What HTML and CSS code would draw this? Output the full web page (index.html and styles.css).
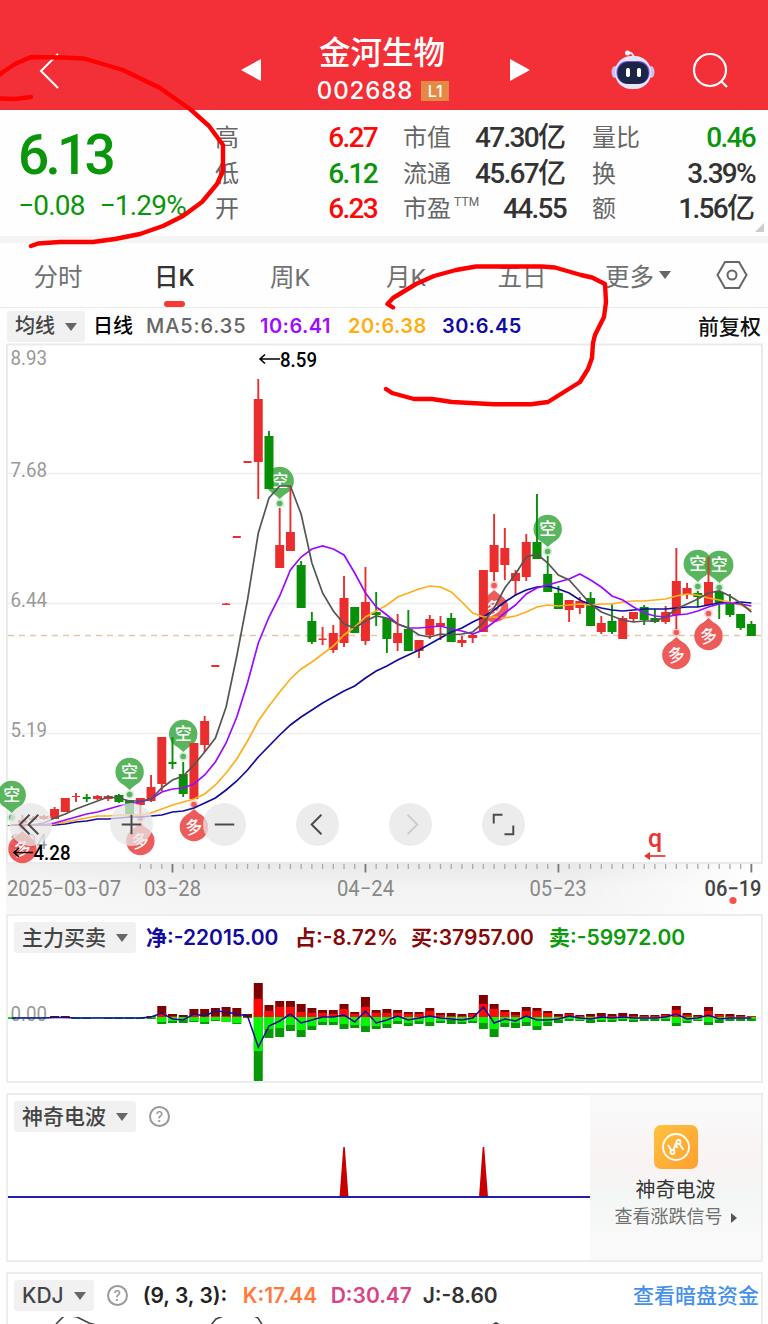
FILE: index.html
```html
<!DOCTYPE html>
<html lang="zh-CN">
<head>
    <meta charset="UTF-8">
    <meta name="viewport" content="width=device-width, initial-scale=1.0">
    <title>金河生物 002688</title>
    <link rel="stylesheet" href="styles.css">
</head>
<body>
    <div class="page">
        <header class="topbar">
            <svg class="back" width="24" height="38" viewBox="0 0 24 38"><path d="M20 2 L3 19 L20 36"/></svg>
            <svg class="arrow" width="20" height="24" viewBox="0 0 20 24"><path d="M0 12 L20 1 V23 Z"/></svg>
            <div class="title">
                <h1>金河生物</h1>
                <div class="code"><span>002688</span><b>L1</b></div>
            </div>
            <svg class="arrow next" width="20" height="24" viewBox="0 0 20 24"><path d="M20 12 L0 1 V23 Z"/></svg>
            <svg class="robot" width="44" height="40" viewBox="0 0 44 40">
                <path d="M17 3 Q22 2 23 8" fill="none" stroke="#eee9ff" stroke-width="2"/>
                <circle cx="16.500" cy="3" r="2.500" fill="#fff"/>
                <ellipse cx="4" cy="22" rx="3.500" ry="6" fill="#c9c0f5"/>
                <ellipse cx="40" cy="22" rx="3.500" ry="6" fill="#c9c0f5"/>
                <rect x="4" y="6" width="36" height="33" rx="16" fill="#e8e4fa"/>
                <rect x="5.500" y="11" width="33" height="23" rx="11" fill="#6d54dc"/>
                <rect x="6.500" y="12" width="31" height="22" rx="10.500" fill="#1c2447"/>
                <rect x="15" y="18" width="4" height="9" rx="1.800" fill="#fff"/>
                <rect x="26" y="18" width="4" height="9" rx="1.800" fill="#fff"/>
            </svg>
            <svg class="search" width="38" height="38" viewBox="0 0 38 38"><circle cx="18" cy="18" r="16"/><path d="M29 29 L35 35"/></svg>
        </header>

        <section class="quote">
            <div class="price">
                <strong>6.13</strong>
                <p><span>−0.08</span><span>−1.29%</span></p>
            </div>
            <dl>
                <div><dt>高</dt><dd class="up">6.27</dd></div>
                <div><dt>低</dt><dd class="down">6.12</dd></div>
                <div><dt>开</dt><dd class="up">6.23</dd></div>
            </dl>
            <dl>
                <div><dt>市值</dt><dd>47.30<i>亿</i></dd></div>
                <div><dt>流通</dt><dd>45.67<i>亿</i></dd></div>
                <div><dt>市盈<sup>TTM</sup></dt><dd>44.55</dd></div>
            </dl>
            <dl>
                <div><dt>量比</dt><dd class="down">0.46</dd></div>
                <div><dt>换</dt><dd>3.39%</dd></div>
                <div><dt>额</dt><dd>1.56<i>亿</i></dd></div>
            </dl>
            <span class="corner"></span>
        </section>

        <nav class="tabs">
            <a>分时</a>
            <a class="active">日K</a>
            <a>周K</a>
            <a>月K</a>
            <a>五日</a>
            <a>更多<i class="caret"></i></a>
            <a><svg width="32" height="30" viewBox="0 0 32 30"><path d="M9 2 H23 L30.500 15 L23 28 H9 L1.500 15 Z"/><circle cx="16" cy="15" r="4.500"/></svg></a>
        </nav>

        <div class="ma-row">
            <span class="select">均线<i class="caret"></i></span>
            <span class="period">日线</span>
            <span class="ma5">MA5:6.35</span>
            <span class="ma10">10:6.41</span>
            <span class="ma20">20:6.38</span>
            <span class="ma30">30:6.45</span>
            <span class="adjust">前复权</span>
        </div>

        <section class="kline">
            <svg id="kline" width="768" height="571" viewBox="0 343 768 571"></svg>
            <div class="tools">
                <button><svg viewBox="0 0 44 44"><path d="M21 12 L11 22 L21 32 M30 12 L20 22 L30 32"/></svg></button>
                <button><svg viewBox="0 0 44 44"><path d="M12 22 H32 M22 12 V32"/></svg></button>
                <button><svg viewBox="0 0 44 44"><path d="M12 22 H32"/></svg></button>
                <button><svg viewBox="0 0 44 44"><path d="M26 12 L16 22 L26 32"/></svg></button>
                <button class="disabled"><svg viewBox="0 0 44 44"><path d="M19 12 L29 22 L19 32"/></svg></button>
                <button><svg viewBox="0 0 44 44"><path d="M12 21 V12 H21 M23 32 H32 V23"/></svg></button>
            </div>
        </section>

        <section class="panel">
            <div class="panel-head">
                <span class="select">主力买卖<i class="caret"></i></span>
                <span class="net">净:-22015.00</span>
                <span class="buy share">占:-8.72%</span>
                <span class="buy">买:37957.00</span>
                <span class="sell">卖:-59972.00</span>
            </div>
            <svg id="flow" width="753" height="122" viewBox="8 959 753 122"></svg>
        </section>

        <section class="panel wave">
            <div class="wave-main">
                <div class="panel-head">
                    <span class="select">神奇电波<i class="caret"></i></span>
                    <span class="help">?</span>
                </div>
                <svg width="582" height="122" viewBox="8 1138 582 122">
                    <path d="M339.500 1197 L343.300 1147 h1.500 L348.500 1197 Z M479 1197 L482.700 1147 h1.500 L488 1197 Z" fill="#c80000"/>
                    <path d="M8 1197 H590" stroke="#1f1fa8" stroke-width="2"/>
                </svg>
            </div>
            <div class="promo">
                <svg width="44" height="44" viewBox="0 0 44 44">
                    <defs><linearGradient id="gold" x1="0" y1="0" x2="1" y2="1"><stop offset="0" stop-color="#ffc240"/><stop offset="1" stop-color="#ff9f2e"/></linearGradient></defs>
                    <rect width="44" height="44" rx="7" fill="url(#gold)"/>
                    <g fill="none" stroke="#fff" stroke-width="1.800">
                        <circle cx="22" cy="22" r="13"/>
                        <circle cx="18.500" cy="27" r="2"/>
                        <circle cx="24.500" cy="17" r="2"/>
                        <path d="M14 20 L17.500 25.500 M19.500 25 L21.500 19.500 L23.500 23 M25.500 19 L29.500 25"/>
                    </g>
                </svg>
                <h3>神奇电波</h3>
                <p>查看涨跌信号<i></i></p>
            </div>
        </section>

        <section class="panel kdj">
            <div class="panel-head">
                <span class="select">KDJ<i class="caret"></i></span>
                <span class="help">?</span>
                <span class="params">(9, 3, 3):</span>
                <span class="k">K:17.44</span>
                <span class="d">D:30.47</span>
                <span class="j">J:-8.60</span>
                <a class="link">查看暗盘资金</a>
            </div>
            <svg width="753" height="10" viewBox="8 1317 753 10">
                <path d="M56 1324 L65 1315 L77 1317 L89 1323 L96 1325 M211 1325 L216 1319 L226 1315 L237 1313 L248 1313 L258 1318 L263 1326 M492 1325 L496 1323 L500 1325" fill="none" stroke="#444" stroke-width="1.600"/>
            </svg>
        </section>

        <svg class="pen" width="768" height="420" viewBox="0 0 768 420">
            <path d="M31 246 L38 243.500 L60 242 L93 242 L115 239 L140 234 L163 226 L183 216 L202 202 L217 184 L223 171 L223 145 L209 126 L190 109 L160 88 L123 70 L84 58.500 L62 57.500 L31 57 L15 64 L3 72 L-2 76"/>
            <path d="M-2 98.500 L15 99 L31 97"/>
            <path d="M393 307.500 L387.500 304 L393 298 L416 284 L434 276 L456 270 L476 266.500 L542 266.500 L555 267.500 L581 275 L592 277.500 L605 284 L606 302 L604 317 L595 335 L593 343 L592 358 L588 369 L580 382 L548 402 L531 404.300 L494 404.300 L452 402 L432 399 L414 399 L392 393 L386 389"/>
        </svg>
    </div>
    <script src="script.js"></script>
</body>
</html>
```
FILE: styles.css
```css
* {
    box-sizing: border-box;
}
body {
    margin: 0;
    background-color: #fefefe;
    font-family: Roboto, "Noto Sans CJK SC", sans-serif;
    color: #333;
}
h1, h3, p, dl, dd {
    margin: 0;
}
i {
    font-style: normal;
}
svg {
    display: block;
    flex: none;
}
.page {
    position: relative;
    width: 768px;
    height: 1324px;
    overflow: hidden;
}

/* top bar */
.topbar {
    display: flex;
    height: 110px;
    padding: 28px 38px 0 38px;
    background-color: #f33038;
    color: #fff;
}
.back {
    margin: 24px 179px 0 0;
    fill: none;
    stroke: #fff;
    stroke-width: 2;
}
.arrow {
    margin-top: 30px;
    fill: #fff;
}
.title {
    width: 250px;
    display: flex;
    flex-direction: column;
    align-items: center;
    padding-right: 5px;
}
.title h1 {
    font-size: 31.5px;
    line-height: 44px;
    font-weight: 500;
    font-family: "Noto Sans CJK SC", sans-serif;
}
.code {
    display: flex;
    align-items: center;
    gap: 8px;
    margin-left: 2px;
    height: 38px;
    font: 500 24px/38px Inter, sans-serif;
    letter-spacing: 0.9px;
}
.code b {
    width: 28px;
    height: 20px;
    background-color: #e48a45;
    font: 500 16px/20px Inter, sans-serif;
    letter-spacing: 0;
    text-align: center;
}
.next {
    margin-left: 2px;
}
.robot {
    margin: 22px 0 0 81px;
}
.search {
    margin: 24px 0 0 37px;
    fill: none;
    stroke: #fff;
    stroke-width: 2.2;
}

/* quote */
.quote {
    position: relative;
    display: grid;
    grid-template-columns: 169px 162px 163px 163px;
    column-gap: 26px;
    height: 133px;
    padding: 10px 13px 0 20px;
    border-bottom: 7px solid #f4f4f4;
}
.price {
    color: #0a960a;
    white-space: nowrap;
}
.price strong {
    display: block;
    margin: 5px 0 0 -2px;
    font-size: 55px;
    line-height: 60px;
    font-weight: 500;
    letter-spacing: -3.8px;
}
.price p {
    display: flex;
    gap: 15px;
    margin: 6px 0 0 -2px;
    font-size: 28px;
    line-height: 30px;
    letter-spacing: -0.8px;
}
.quote dl div {
    display: flex;
    justify-content: space-between;
    height: 35.5px;
    line-height: 35px;
}
.quote dt {
    font-size: 24px;
    line-height: 37px;
    color: #666;
    white-space: nowrap;
}
.quote dd {
    font-size: 28px;
    font-weight: 500;
    letter-spacing: -1.7px;
    white-space: nowrap;
}
.quote dd i {
    letter-spacing: 0;
    font-weight: 500;
}
.quote sup {
    font-size: 12px;
    line-height: 1;
    vertical-align: 11px;
    letter-spacing: 0.2px;
    margin-left: 3px;
}
.quote .up {
    color: #fb0a0a;
}
.quote .down {
    color: #0a960a;
}
.corner {
    position: absolute;
    right: 4px;
    bottom: 4px;
    border-left: 9px solid transparent;
    border-bottom: 9px solid #ccc;
}

/* tabs */
.tabs {
    display: grid;
    grid-template-columns: repeat(6, 116px) 1fr;
    height: 65px;
    border-bottom: 1px solid #ededed;
}
.tabs a {
    position: relative;
    display: flex;
    align-items: center;
    justify-content: center;
    font-size: 24.5px;
    color: #707070;
}
.tabs .active {
    font-weight: 500;
    color: #333;
}
.tabs .active::after {
    content: "";
    position: absolute;
    left: 48px;
    bottom: 0;
    width: 21px;
    height: 6px;
    border-radius: 3px;
    background-color: #f83a32;
}
.tabs svg {
    fill: none;
    stroke: #666;
    stroke-width: 2;
}
.caret {
    display: inline-block;
    border: 6px solid transparent;
    border-top: 8px solid #666;
    border-bottom: 0;
    margin-left: 10px;
}
.tabs .caret {
    margin-left: 5px;
}

/* moving averages */
.ma-row {
    display: flex;
    align-items: center;
    height: 35px;
    padding: 2px 7px 0;
    font: 600 20px/31px Inter, "Noto Sans CJK SC", sans-serif;
    letter-spacing: 0.45px;
    white-space: nowrap;
}
.select {
    display: flex;
    align-items: center;
    height: 31px;
    padding: 0 8px;
    border-radius: 3px;
    background-color: #f1f1f1;
    color: #444;
    font-weight: 500;
    letter-spacing: 0;
}
.period {
    margin: 0 13px 0 8px;
    color: #000;
    font-weight: 500;
    letter-spacing: 0;
}
.ma5 { width: 114px; color: #666; font-weight: 500; letter-spacing: 0.9px; }
.ma10 { width: 88px; color: #9d0cff; }
.ma20 { width: 94px; color: #ffae12; }
.ma30 { color: #120ba3; }
.adjust {
    margin-left: auto;
    color: #111;
    font-size: 21px;
    font-weight: 500;
    letter-spacing: 0;
}

/* candles */
.kline {
    position: relative;
    height: 571px;
}
.kline text {
    font-family: Roboto, "Noto Sans CJK SC", sans-serif;
}
.tools {
    position: absolute;
    left: 9px;
    top: 460px;
    display: flex;
    gap: 50px;
}
.tools button {
    width: 43px;
    height: 43px;
    padding: 0;
    border: 0;
    border-radius: 50%;
    background-color: rgba(230, 230, 230, 0.75);
}
.tools button:first-child {
    margin-right: 8px;
}
.tools svg {
    fill: none;
    stroke: #4a4a4a;
    stroke-width: 2;
}
.tools .disabled svg {
    stroke: #ccc;
}

/* indicator panels */
.panel {
    height: 169px;
    margin: 0 5px 10px 6px;
    border: 2px solid #ededed;
    background-color: #fff;
}
.panel-head {
    display: flex;
    align-items: center;
    height: 43px;
    padding-left: 6px;
    font: 600 21px/31px Inter, "Noto Sans CJK SC", sans-serif;
    white-space: nowrap;
}
.net { width: 149px; margin-left: 10px; color: #120b9c; }
.buy { width: 138px; color: #840909; }
.share { width: 116px; }
.sell { color: #0b9a0b; }
.wave {
    display: flex;
}
.wave-main {
    width: 582px;
}
.help {
    width: 21px;
    height: 21px;
    margin-left: 13px;
    border: 2px solid #999;
    border-radius: 50%;
    color: #999;
    font-size: 14px;
    font-weight: 500;
    line-height: 17px;
    text-align: center;
}
.promo {
    flex: 1;
    display: flex;
    flex-direction: column;
    align-items: center;
    padding-top: 30px;
    background: linear-gradient(#f9f9f9 10%, #faf3f3 40%, #f3f7f5 62%, #f9f9f9 85%);
}
.promo h3 {
    margin-top: 6px;
    font-size: 20px;
    line-height: 30px;
    font-weight: 400;
}
.promo p {
    font-size: 18px;
    line-height: 24px;
    color: #707070;
}
.promo i {
    display: inline-block;
    margin-left: 8px;
    border: 5px solid transparent;
    border-left: 6px solid #555;
    border-right: 0;
}
.params { margin-left: 15px; width: 100px; color: #222; }
.k { width: 88px; color: #ff7a3d; }
.d { width: 92px; color: #d84585; }
.j { color: #333; }
.link {
    margin-left: auto;
    margin-right: 2px;
    color: #4490ea;
    font-weight: 500;
}

/* red pen marks over the page */
.pen {
    position: absolute;
    left: 0;
    top: 0;
    fill: none;
    stroke: #f00;
    stroke-width: 4.4;
    stroke-linecap: round;
    stroke-linejoin: round;
    pointer-events: none;
}
```
FILE: script.js
```javascript
const RED = '#ea2e2e';
const GREEN = '#079007';
const x = i => 11.7 + 10.72 * i;

// [up, high, body top, body bottom, low]
const candles = [
    [0,825,825,826,826],[1,815,820,823,825],[1,816,818,820,822],[1,815,816,819,820],[1,807,809,819,819],
    [1,798,798,812,812],[1,793,796,797,802],[0,794,797,799,802],[1,795,796,799,800],[1,795,796,799,801],
    [0,794,795,802,803],[0,800,800,814,817],[1,798,798,805,820],[1,775,787,801,802],[1,737,737,784,791],
    [0,737,762,764,769],[0,762,774,794,797],[1,743,743,799,799],[1,716,721,745,752],[1,665,665,667,667],
    [1,603,603.5,605,605],[1,536,536,538,538],[1,461,461,463,463],[1,379,399,462,499],[0,431,436,489,489],
    [1,508,545,568,568],[1,486,532,551,551],[0,561,565,608,608],[0,612,621,642,644],[1,627,638.5,640,645],
    [1,625,633,650,653],[1,576,598,643,647],[0,607,607,633,633],[1,567,602,641,645],[0,592,612,615,626],
    [0,618,618,639,653],[1,614,633,643,651],[0,610,629,651,651],[1,640,640,651,658],[1,615,619,635,639],
    [1,616,623,626,640],[0,613,618,642,642],[1,636,640,643,647],[1,634,635,638,643],[1,570,570,632,632],
    [1,514,545,572,581],[1,528,548,565,580],[1,570,573,581,596],[1,534,542,577,581],[0,494,542,559,559],
    [0,556,574,592,592],[0,586,593,609,609],[1,600,600,610,622],[1,597,601,608,614],[0,592,598,626,626],
    [1,616,623,632,634],[0,604,621,632,634],[1,616,618,639,639],[1,612,612,619,622],[0,605,607,620,625],
    [0,609,618,622,623],[1,606,612,622,624],[1,548,581,615,629],[1,583,588,594,599],[0,591,593,597,607],
    [1,557,582,605,605],[0,592,592,604,619],[0,594,603,615,617],[0,614,614,628,630],[0,621,624,636,636]
];

const averages = [
    ['#120b9c', [825,825,825,825,825,824,822,821,819,819,818,817,817,816,815,812,811,808,803,798,790,781,770,757,746,735,725,717,710,703,697,691,686,678,671,666,660,655,650,644,638,632,628,622,617,610,602,595,590,587,586,589,593,600,605,608,610,611,610,609,609,609,608,607,607,605,603,603,602,603]],
    ['#ffae1a', [825,825,825,825,824,822,820,818,816,816,815,815,815,813,809,805,802,799,794,785,773,759,741,721,706,692,679,669,662,654,646,635,627,617,611,605,597,593,589,586,587,592,602,613,617,617,618,616,612,607,605,606,605,604,605,604,604,602,601,601,600,599,596,594,595,598,600,602,605,610]],
    ['#9a0cff', [825,825,825,825,823,820,817,814,812,809,806,804,802,799,792,789,788,784,775,762,743,717,683,643,617,596,570,557,549,546,549,555,573,593,607,615,624,628,628,627,626,629,631,634,630,622,613,605,594,588,585,582,579,574,580,587,596,600,607,613,616,617,615,614,611,607,604,603,604,606]],
    ['#555', [825,825,825,823,818,814,809,805,801,797,798,801,801,799,788,780,776,765,752,738,707,656,600,533,498,486,486,514,563,593,611,624,628,621,616,618,624,628,635,637,634,635,634,632,623,608,588,574,557,554,563,575,580,592,604,612,616,620,622,621,621,617,609,604,599,593,591,596,603,612]]
];

// [index, balloon centre y]
const shortPins = [[0,795],[11,772],[16,734],[25,481],[50,529],[64,564],[66,565]];
const longPins = [[1,849],[12,841],[17,827],[45,608],[62,655],[65,636]];

const line = (points, color, width) =>
    `<polyline points="${points.map((y, i) => x(i).toFixed(1) + ',' + y).join(' ')}" fill="none" stroke="${color}" stroke-width="${width}"/>`;
const label = (tx, ty, text, width, size, color, weight) =>
    `<text x="${tx}" y="${ty}" font-size="${size}" fill="${color}" font-weight="${weight || 400}" textLength="${width}" lengthAdjust="spacingAndGlyphs">${text}</text>`;

function pin(i, y, dir, text, color) {
    const cx = x(i);
    const turn = dir < 0 ? ` transform="rotate(-12 ${cx} ${y})"` : '';
    return `<g opacity="0.88"><circle cx="${cx}" cy="${y}" r="14.2" fill="${color}"/>
        <path d="M${cx - 8} ${y + 11 * dir} L${cx} ${y + 18 * dir} L${cx + 8} ${y + 11 * dir} Z" fill="${color}"/>
        <circle cx="${cx}" cy="${y + 22.5 * dir}" r="4.5" fill="${color}" opacity="0.25"/>
        <circle cx="${cx}" cy="${y + 22.5 * dir}" r="2.8" fill="${color}"/>
        <text x="${cx}" y="${y + 6}" font-size="17" font-weight="500" text-anchor="middle" fill="#fff"${turn}>${text}</text></g>`;
}

function drawKline() {
    let s = `<defs>
        <linearGradient id="shade" x1="0" y1="0" x2="0" y2="1"><stop offset="0" stop-color="#e9e9e9"/><stop offset="0.45" stop-color="#f3f3f3"/><stop offset="1" stop-color="#f5f5f5"/></linearGradient>
        <linearGradient id="fade"><stop offset="0" stop-color="#fff" stop-opacity="0.3"/><stop offset="0.25" stop-color="#fff" stop-opacity="0"/><stop offset="0.75" stop-color="#fff" stop-opacity="0"/><stop offset="1" stop-color="#fff"/></linearGradient></defs>
        <rect x="6" y="863" width="762" height="51" fill="url(#shade)"/>
        <rect x="6" y="863" width="762" height="51" fill="url(#fade)"/>
        <rect x="7" y="344.500" width="755" height="518.500" fill="#fff" stroke="#ebebeb" stroke-width="2"/>
        <path d="M8 473.500 H761 M8 603.500 H761 M8 733.500 H761" stroke="#eee" stroke-width="1.500"/>
        <path d="M8 635.500 H761" stroke="#dfc9a6" stroke-width="1.300" stroke-dasharray="6 5"/>`;
    [['8.93', 365], ['7.68', 477], ['6.44', 607], ['5.19', 737], ['3.94', 849]].forEach(r => {
        s += label(10.5, r[1], r[0], 36.5, 21, '#999');
    });
    shortPins.forEach(p => { s += pin(p[0], p[1], 1, '空', '#43ac48'); });
    longPins.forEach(p => { s += pin(p[0], p[1], -1, '多', '#ec4545'); });
    candles.forEach((c, i) => {
        const color = c[0] ? RED : GREEN;
        const half = c[3] - c[2] <= 2 ? 4 : 4.5;
        s += `<path d="M${x(i)} ${c[1]} V${c[4]}" stroke="${color}" stroke-width="1.9"/>
            <rect x="${x(i) - half}" y="${c[2]}" width="${half * 2}" height="${c[3] - c[2]}" fill="${color}"/>`;
    });
    averages.forEach(a => { s += line(a[1], a[0], 1.7); });
    s += `<g stroke="#000" stroke-width="1.600" fill="none">
        <path d="M280 359 H260 M265 354.500 L260 359 L265 363.500"/>
        <path d="M33 852.500 H14 M19 848 L14 852.500 L19 857"/></g>`;
    s += label(280, 367, '8.59', 37, 20.5, '#000', 500) + label(33.5, 860, '4.28', 37, 21, '#000', 500);
    s += `<text x="648" y="847" font-size="25" font-weight="500" fill="#ea3434">q</text>
        <path d="M665.500 856 H647" stroke="#ea3434" stroke-width="1.700"/><path d="M644 856 L650 852 V860 Z" fill="#ea3434"/>`;
    for (let i = 12; i < 70; i++) {
        const major = i === 15 || i === 33 || i === 51 || i === 69;
        s += `<path d="M${x(i)} 864 V${major ? 872.500 : 869}" stroke="${major ? '#777' : '#aaa'}" stroke-width="${major ? 1.8 : 1.3}"/>`;
    }
    s += label(7, 895.5, '2025−03−07', 114, 21.5, '#888') + label(144, 895.5, '03−28', 57, 21.5, '#888')
        + label(337, 895.5, '04−24', 57, 21.5, '#888') + label(529.5, 895.5, '05−23', 57, 21.5, '#888')
        + label(704.5, 895.5, '06−19', 57, 21.5, '#444', 500)
        + '<circle cx="733" cy="900.500" r="3.600" fill="#f55252"/>';
    document.getElementById('kline').innerHTML = s;
}

// heights around the zero line: [buy total, buy big, sell big, sell total]
const flow = [
    [0,0,1.5,2],[0,0,1,1],[0,0,1,1],[0,0,1,1],[1,0,1,1],[1,0,1,1],[0,0,1,2],[0,0,1,2],[0,0,1,1],[0,0,1,2],
    [0,0,1,2],[0,0,1,2],[0,0,1,2],[1,0,1,2],[11,4,5,7],[3,1,4,6],[2,0,3,6],[8,2,4,5],[8,1,5,7],[9,1,3,4],
    [10,1,5,5],[9,1,6,7],[3,0,0,1],[34,18,34,64],[12,6,12,21],[16,10,11,20],[16,10,8,14],[13,5,13,20],[9,4,9,13],[7,4,5,8],
    [7,3,5,8],[13,8,7,12],[5,3,8,11],[20,10,9,15],[7,4,9,12],[8,4,7,11],[7,4,4,7],[5,3,6,9],[5,3,4,7],[9,6,5,9],
    [4,2,4,6],[4,1,3,7],[3,1,5,7],[4,3,4,6],[22,13,6,12],[13,8,12,20],[7,5,6,10],[5,2,6,11],[10,6,5,9],[9,6,9,13],
    [6,4,5,9],[3,1,3,6],[4,3,2,4],[2,1,3,4],[3,1,3,6],[4,1,3,5],[3,1,3,5],[4,1,2,4],[3,1,3,5],[2,1,2,4],
    [2,1,2,4],[3,2,2,4],[11,7,6,9],[4,2,4,6],[2,1,3,4],[10,6,5,8],[3,2,3,6],[3,1,2,4],[2,1,2,4],[1,1,2,4]
];
const net = [1018,1018,1018,1018,1017.5,1017.5,1018,1018,1018,1018,1018,1018,1018,1017,1013,1019,1020,1014,1016,1011,1012,1014,1016,1047,1026,1021,1014,1023,1020,1017,1017,1015,1022,1011,1023,1020,1016,1020,1018,1016,1018,1019,1020,1018,1007,1023,1019,1021,1016,1020,1020,1019,1016,1018,1019,1017,1018,1017,1018,1018,1018,1017,1014,1019,1018,1015,1019,1018,1018,1018];

function drawFlow() {
    const zero = 1017;
    let s = `<path d="M8 1018 H761" stroke="#eee" stroke-width="1.500"/>`;
    flow.forEach((f, i) => {
        const bar = (y, h, color) => `<rect x="${x(i) - 4.5}" y="${y}" width="9" height="${h}" fill="${color}"/>`;
        s += bar(zero - f[0], f[0], '#800000') + bar(zero - f[1], f[1], '#ff0808')
            + bar(zero, f[3], '#079807') + bar(zero, f[2], '#05f505');
    });
    s += label(10.5, 1021, '0.00', 36.5, 21, '#999') + line(net, '#120b9c', 1.5);
    document.getElementById('flow').innerHTML = s;
}

drawKline();
drawFlow();
```
